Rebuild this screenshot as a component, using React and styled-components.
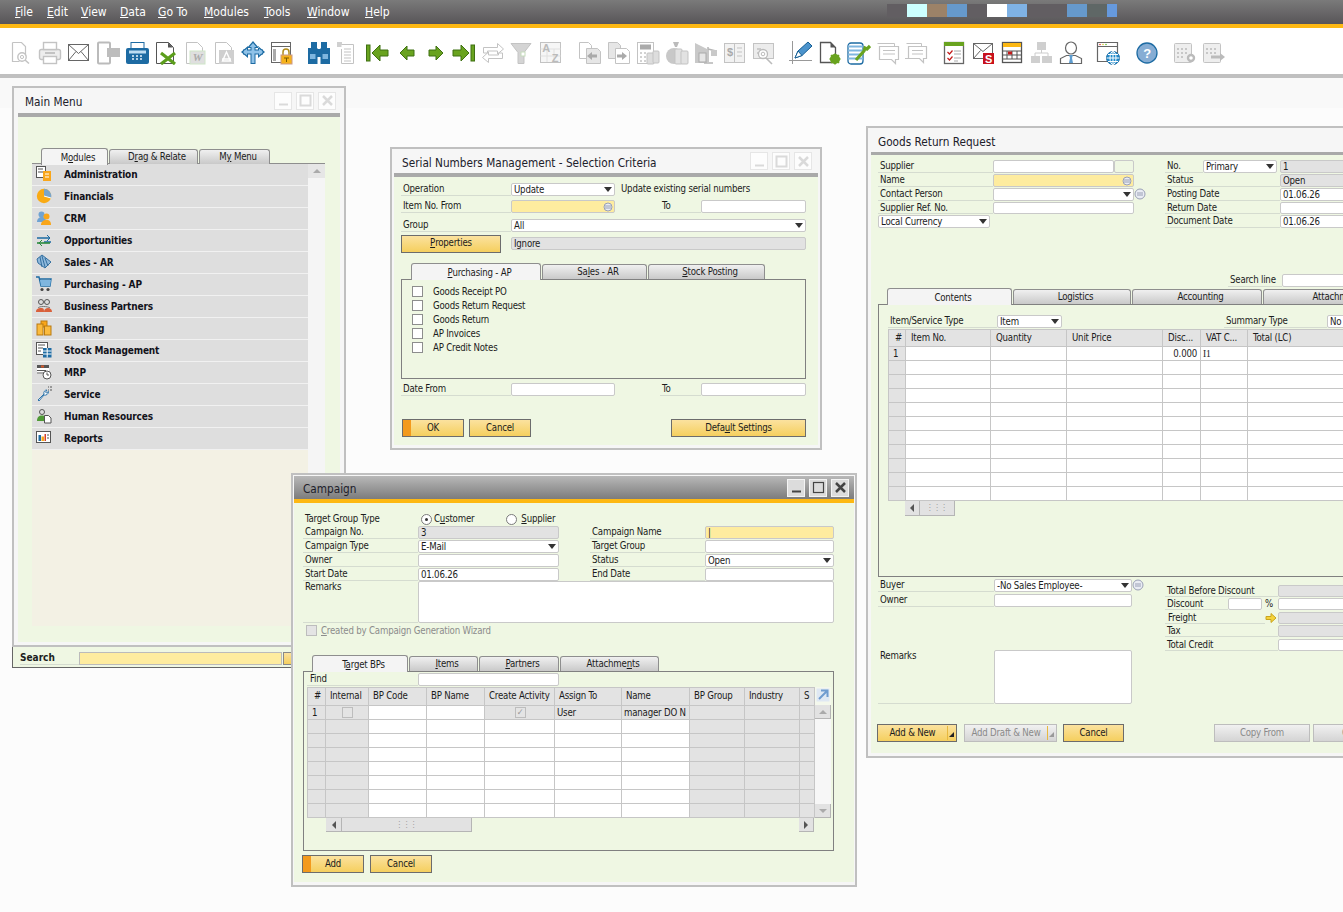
import React from 'react';
import styled, { createGlobalStyle, css } from 'styled-components';

const Global = createGlobalStyle`
  html, body { margin: 0; padding: 0; background: #fcfcfc; }
  body { font-family: "DejaVu Sans Condensed", "DejaVu Sans", "Noto Sans", sans-serif; font-stretch: condensed; font-size: 9.6px; letter-spacing: -0.2px; color: #1c1c1c; }
  u { text-decoration-thickness: 1px; text-underline-offset: 1px; }
`;

const Page = styled.div`width: 1343px; height: 912px; overflow: hidden; display: flex; flex-direction: column;`;
const MenuBar = styled.div`height: 24px; flex: none; display: flex; align-items: center; padding-left: 15px; background: linear-gradient(#7a7a7a, #585558); color: #fff; font-size: 12px; letter-spacing: 0;`;
const MenuItem = styled.span`white-space: nowrap; width: ${p => p.$w}px; flex: none;`;
const Swatches = styled.div`display: flex; margin-left: auto; margin-right: 226px; height: 13px; align-self: flex-start; margin-top: 4px;`;
const Swatch = styled.i`display: block; width: ${p => p.$w || 20}px; background: ${p => p.$c};`;
const OrangeLine = styled.div`height: 4px; flex: none; background: #fdb813;`;
const Toolbar = styled.div`height: 46px; box-sizing: border-box; flex: none; background: #fff; display: flex; align-items: center; padding: 3px 0 0 6px;`;
const ToolGroup = styled.div`display: flex; margin-right: ${p => p.$gap}px;`;
const Tool = styled.span`width: 29px; height: 24px; display: flex; justify-content: center;`;
const ToolStrip = styled.div`height: 4px; flex: none; background: #c0c0c0;`;
const Desktop = styled.div`flex: 1; position: relative; overflow: hidden; background: linear-gradient(#f9f9f9 30px, #fcfcfc 30px);`;

const Placed = styled.div`position: absolute; left: ${p => p.$x}px; top: ${p => p.$y - 78}px; width: ${p => p.$w}px;`;
const Frame = styled.div`height: ${p => p.$h}px; box-sizing: border-box; border: 2px solid #c0c0c0; background: #f6f6f6; padding: 0 ${p => p.$px}px 3px; display: flex; flex-direction: column;`;
const TitleBar = styled.div`height: ${p => p.$h}px; flex: none; display: flex; align-items: center; box-sizing: border-box; padding: 0 8px 0 ${p => p.$pl}px; margin: 0 ${p => -p.$px}px; font-size: 11.7px; letter-spacing: 0; color: #20202a;
  ${p => p.$active && css`background: linear-gradient(#b8b8b8, #7c7c7c); margin: 1px 0 0; padding: 0 5px 0 9px;`}`;
const TitleText = styled.span`flex: 1; white-space: nowrap; padding-top: 3px;`;
const TitleStrip = styled.div`height: ${p => p.$h}px; flex: none; background: ${p => p.$c};`;
const Controls = styled.div`display: flex; gap: 4px;`;
const WinBtn = styled.span`width: 18px; height: 18px; box-sizing: border-box; display: flex; align-items: center; justify-content: center; background: ${p => p.$active ? '#dcdcdc' : '#fdfdfd'}; border: 1px solid ${p => p.$active ? '#f4f4f4' : '#e6e6e6'};`;
const Body = styled.div`flex: 1; background: #eff7e3; padding-left: ${p => p.$pl || 0}px; padding-top: ${p => p.$pt || 0}px; overflow: hidden;`;

const Row = styled.div`display: flex; align-items: ${p => p.$align || 'stretch'}; height: ${p => p.$h || 13}px; margin-top: ${p => p.$mt || 0}px; margin-left: ${p => p.$ml || 0}px; white-space: nowrap;`;
const Label = styled.div`width: ${p => p.$w}px; flex: none; box-sizing: border-box; padding-left: ${p => p.$pl ?? 2}px; line-height: 12px; border-bottom: 1px solid ${p => p.$bare ? 'transparent' : '#d5dcd0'};`;
const Plain = styled.span`margin-left: ${p => p.$ml || 0}px; line-height: 12px; color: ${p => p.$c || 'inherit'};`;
const Field = styled.div`width: ${p => p.$w}px; height: ${p => p.$h ? p.$h + 'px' : 'auto'}; flex: none; box-sizing: border-box; display: flex; align-items: center; justify-content: space-between; padding: 0 1px 0 2px; line-height: 11px; overflow: hidden; border: 1px solid #c9c9c9; border-radius: 2px; background: ${p => ({ y: '#feec9f', g: '#e2e2e2', n: 'transparent' }[p.$tone] || '#fff')};`;
const Caret = styled.i`display: block; width: 0; height: 0; margin-right: 1px; border: 4px solid transparent; border-top: 5px solid #333; border-bottom: 0;`;
const Spacer = styled.div`width: ${p => p.$w}px; flex: none;`;

const TabBar = styled.div`display: flex; height: ${p => p.$h || 16}px; margin-top: ${p => p.$mt || 0}px; margin-left: ${p => p.$ml}px; gap: 1px; position: relative; z-index: 1; align-items: flex-end;`;
const Tab = styled.div`width: ${p => p.$w}px; box-sizing: border-box; text-align: center; padding-left: 7px; border: 1px solid #8e8e8e; border-bottom: 0; border-radius: 3px 3px 0 0; line-height: 13px; white-space: nowrap; overflow: hidden;
  ${p => p.$on ? css`height: calc(100% + 1px); margin-bottom: -1px; background: #f4f4f4; padding-top: 2px;` : css`height: calc(100% - 1px); background: linear-gradient(#f0f0f0, #c9c9c9);`}`;
const Panel = styled.div`width: ${p => p.$w}px; height: ${p => p.$h}px; box-sizing: border-box; border: 1px solid #808080; margin-left: ${p => p.$ml || 0}px; padding: ${p => p.$pad || 0}; overflow: hidden;`;
const CheckRow = styled.div`display: flex; align-items: center; height: 14px; padding-left: 10px;`;
const Check = styled.span`width: 11px; height: 11px; flex: none; box-sizing: border-box; border: 1px solid ${p => p.$dim ? '#bdbdbd' : '#8d8d8d'}; background: ${p => p.$dim ? '#e4e4e4' : '#fff'}; display: flex; align-items: center; justify-content: center; color: #999; font-size: 9px; margin-right: ${p => p.$mr ?? 10}px;`;
const Radio = styled.span`width: 11px; height: 11px; box-sizing: border-box; flex: none; border-radius: 50%; border: 1px solid #7b7b7b; background: #fff; display: flex; align-items: center; justify-content: center; margin-right: 2px; margin-top: 1px;
  &::after { content: ''; display: ${p => p.$on ? 'block' : 'none'}; width: 3px; height: 3px; border-radius: 50%; background: #333; }`;
const Button = styled.div`width: ${p => p.$w}px; height: 18px; box-sizing: border-box; flex: none; display: flex; align-items: center; justify-content: center; padding-bottom: 2px; white-space: nowrap; border: 1px solid #6c6c6c; background: ${p => p.$primary ? 'linear-gradient(90deg, #f39a1d 8px, transparent 8px), ' : ''}linear-gradient(#fbe29f, #f5cf5e);
  ${p => p.$off && css`background: linear-gradient(#f1f1f1, #d4d4d4); border-color: #bdbdbd; color: #8a8a8a;`}`;
const BtnLabel = styled.span`flex: 1; text-align: center;`;
const Split = styled.span`width: 9px; height: 100%; margin-bottom: -2px; flex: none; display: flex; align-items: flex-end; justify-content: center; padding-bottom: 3px; box-sizing: border-box; background: linear-gradient(90deg, #e8b93e 1px, transparent 1px);`;
const SplitMark = styled.i`display: block; width: 0; height: 0; border-left: 5px solid transparent; border-bottom: 5px solid ${p => p.$off ? '#999' : '#222'};`;

const GridWrap = styled.div`display: flex; margin-top: ${p => p.$mt}px; margin-left: ${p => p.$ml}px;`;
const Grid = styled.div`display: grid; flex: none; grid-template-columns: ${p => p.$cols.map(c => c + 'px').join(' ')}; grid-template-rows: ${p => p.$head}px repeat(${p => p.$rows}, ${p => p.$rh}px); border-left: 1px solid #c6c6c6; border-top: 1px solid #c6c6c6;`;
const Cell = styled.div`box-sizing: border-box; border-right: 1px solid #c6c6c6; border-bottom: 1px solid #c6c6c6; background: ${p => p.$g ? '#e3e3e3' : '#fff'}; padding: 0 ${p => p.$pr || 1}px 0 ${p => p.$pl || 2}px; line-height: 13px; overflow: hidden; white-space: nowrap; text-align: ${p => p.$right ? 'right' : 'left'}; display: ${p => p.$center ? 'flex' : 'block'}; align-items: center; justify-content: center; ${p => p.$serif && 'font-family: "Liberation Serif", serif;'}`;
const HeadCell = styled(Cell)`background: #e3e3e3; padding-left: ${p => p.$pl || 5}px; padding-top: 1px;`;
const VBar = styled.div`width: 16px; flex: none; display: flex; flex-direction: column; background: #f4f8ec;`;
const Expand = styled.div`height: ${p => p.$h}px; flex: none; display: flex; justify-content: center;`;
const SBtn = styled.div`width: ${p => p.$w || 'auto'}; height: ${p => p.$h || 'auto'}; flex: none; background: #e2e2e2; border-right: 1px solid #b5b5b5; border-bottom: 1px solid #b5b5b5; box-sizing: border-box; display: flex; align-items: center; justify-content: center;`;
const VFill = styled.div`flex: 1; background: #f7f7f7;`;
const Tri = styled.i`display: block; width: 0; height: 0; border: 4px solid transparent;
  ${p => p.$d === 'up' && css`border-bottom: 4px solid #aaa; border-top: 0;`}
  ${p => p.$d === 'down' && css`border-top: 4px solid #aaa; border-bottom: 0;`}
  ${p => p.$d === 'left' && css`border-right: 4px solid #555; border-left: 0;`}
  ${p => p.$d === 'right' && css`border-left: 4px solid #555; border-right: 0;`}`;
const HBar = styled.div`display: flex; height: ${p => p.$h}px; margin-left: ${p => p.$ml}px; width: ${p => p.$w}px;`;
const Thumb = styled(SBtn)`color: #999; font-size: 8px; letter-spacing: 0; line-height: 8px;`;

const TopColumns = styled.div`display: flex; padding-top: ${p => p.$pt}px;`;
const Col = styled.div`width: ${p => p.$w}px; flex: none;`;

const Tabs2 = styled.div`margin-top: 31px; margin-left: 14px;`;
const MenuPanel = styled.div`display: flex; width: 293px; height: 463px; margin-top: -1px; border-top: 1px solid #8e8e8e; box-sizing: border-box;`;
const ModList = styled.div`width: 276px; flex: none; background: #f3f1e4;`;
const ModRow = styled.div`height: 22px; box-sizing: border-box; background: #dedede; border-bottom: 1px solid #f1f1f1; display: flex; align-items: center; padding: 0 0 1px 4px; font-weight: 700; font-size: 10px; letter-spacing: -0.15px; color: #12121a;`;
const ModText = styled.span`margin-left: 12px;`;
const ScrollCol = styled.div`flex: 1; display: flex; flex-direction: column; background: #f5f5f5;`;
const ScrollTop = styled.div`height: 14px; background: #e6e6e6; display: flex; align-items: center; justify-content: center;`;
const SearchStrip = styled.div`height: 21px; box-sizing: border-box; background: #eff7e3; border-left: 1px solid #666; border-bottom: 1px solid #666; display: flex; align-items: center; padding: 2px 0 0 7px; font-weight: 700; font-size: 10px; letter-spacing: 0;`;
const SearchInput = styled.div`width: 203px; height: 13px; box-sizing: border-box; border: 1px solid #bbb; background: #feec9f; flex: none;`;
const SearchBtn = styled.div`width: 12px; height: 13px; margin-left: 1px; flex: none; border: 1px solid #888; box-sizing: border-box; background: linear-gradient(#fbe29f, #f5cf5e);`;
const SearchLabel = styled.div`width: 59px; flex: none; border-bottom: 1px solid #d5dcd0; line-height: 12px;`;

const IconSvg = styled.svg`display: block; flex: none;`;
const S = ({ s = 24, children }) => <IconSvg width={s} height={s} viewBox={`0 0 ${s} ${s}`} fill="none" strokeLinejoin="miter">{children}</IconSvg>;
const G = '#c3c3c3', D = '#666', B = '#1d6ba3', L = '#7fb6df', N = '#69a31f', NN = '#3f7013';
const TI = {
  docSearch: <><path d="M3.5 1.5h9l4 4v9M3.5 1.5v19h7" stroke={G} strokeWidth="1.2" /><circle cx="13" cy="16" r="4.2" stroke={G} strokeWidth="1.4" /><circle cx="13" cy="16" r="1.6" stroke={G} /><path d="M16 19l4 3.5" stroke={G} strokeWidth="1.6" /></>,
  printer: <><rect x="1.5" y="8.5" width="21" height="10" rx="2" fill="#ededed" stroke={G} strokeWidth="1.4" /><rect x="5.5" y="1.5" width="13" height="7" fill="#fff" stroke={G} strokeWidth="1.4" /><rect x="5.5" y="15.5" width="13" height="7" fill="#fff" stroke={G} strokeWidth="1.4" /><path d="M7 12h10" stroke={G} strokeWidth="2" /></>,
  mail: <><rect x="1.5" y="3.5" width="20" height="16" fill="#fff" stroke={D} /><path d="M1.5 3.5L11.5 12.5 21.5 3.5M1.5 19.5l7.5-9M21.5 19.5l-7.5-9" stroke={D} /></>,
  phone: <><rect x="2" y="1.5" width="12" height="21" rx="1" fill="#fff" stroke="#bbb" strokeWidth="2" /><path d="M11 7h13v9h-9l-2 3v-3h-2z" fill="#bdbdbd" /></>,
  fax: <><rect x="1" y="7" width="23" height="16" rx="2" fill={B} /><rect x="6" y="1.5" width="13" height="6" fill="#fff" stroke={B} /><rect x="4" y="9.5" width="17" height="3" fill="#bcdcf2" /><path d="M7 15h2M11 15h2M15 15h2M7 18h2M11 18h2M15 18h2" stroke="#e8f3fb" strokeWidth="1.4" /></>,
  excel: <><path d="M2.5 1.5h12l5 5v16h-17z" fill="#fff" stroke="#555" /><path d="M14 1.5l5 5h-5z" fill="#555" /><path d="M7 12l14 11M21 12L7 23" stroke="#5c9e1c" strokeWidth="3.2" /></>,
  word: <><path d="M3.5 1.5h11l5 5v16h-16z" fill="#fff" stroke={G} /><rect x="7" y="10" width="15" height="13" fill="#dfdfdf" stroke="#cfe6c8" /><text x="14.5" y="20" fontSize="11" fontStyle="italic" fontWeight="700" fill="#aaa" textAnchor="middle" fontFamily="Liberation Serif">W</text></>,
  pdf: <><path d="M3.5 1.5h11l5 5v16h-16z" fill="#fff" stroke={G} /><rect x="7" y="9" width="15" height="14" fill="#cfcfcf" /><path d="M14.5 11l4 9h-8zM10 18h9" stroke="#fff" strokeWidth="1.4" /></>,
  move: <><path d="M12 23V4M2 11h20" stroke={B} strokeWidth="5" /><path d="M12 0l6 7H6zM0 11l7-6v12zM24 11l-7-6v12z" fill={B} /><path d="M12 22V4M3 11h18" stroke="#8fc2e8" strokeWidth="3" /><path d="M12 2l3.5 4h-7zM2 11l4-3.5v7zM22 11l-4-3.5v7z" fill="#8fc2e8" /></>,
  lock: <><rect x="1.5" y="1.5" width="19" height="20" fill="#fff" stroke={D} /><path d="M1.5 5.5h19" stroke={D} /><rect x="3" y="8" width="3" height="12" fill="#aaa" /><path d="M13 14v-3a3 3 0 016 0v3" stroke="#b08b1c" strokeWidth="1.5" /><rect x="11" y="14" width="11" height="9" fill="#f6b21b" stroke="#c98" /><path d="M14 17h5M16.5 17v4" stroke="#7a5a00" /></>,
  binoc: <><rect x="4" y="1" width="6" height="9" fill={B} /><rect x="14" y="1" width="6" height="9" fill={B} /><rect x="1" y="7" width="9.5" height="16" fill={B} /><rect x="13.5" y="7" width="9.5" height="16" fill={B} /><rect x="10" y="8" width="4" height="8" fill={B} /><rect x="3" y="13" width="5.5" height="5" fill={L} /><rect x="15.5" y="13" width="5.5" height="5" fill={L} /></>,
  list: <><rect x="1" y="1" width="5" height="5" fill="#d0d0d0" /><path d="M5.5 3.5h12v19H5.5V8" fill="#fff" stroke={G} /><path d="M8 8h7M8 11h7M8 14h7M8 17h7M8 20h7" stroke={G} /></>,
  first: <><rect x="1.5" y="4" width="3.5" height="16" fill={N} stroke={NN} /><path d="M7 12l8-8v5h8v6h-8v5z" fill={N} stroke={NN} /></>,
  prev: <path d="M6 12l7-7v4h7v6h-7v4z" fill={N} stroke={NN} />,
  next: <path d="M20 12l-7-7v4H6v6h7v4z" fill={N} stroke={NN} />,
  last: <><path d="M17 12l-8-8v5H1v6h8v5z" fill={N} stroke={NN} /><rect x="19" y="4" width="3.5" height="16" fill={N} stroke={NN} /></>,
  swap: <><path d="M2.5 12V6.5h14v-4l6 5.5-6 5v-3h-10v2zM21.5 12v5.5h-14v4l-6-5 6-5.5v3h10v-2z" fill="#fff" stroke={G} /></>,
  funnel: <><path d="M1 2.5h20l-7 9v11h-6v-11z" fill="#d4d4d4" stroke={G} /><rect x="11" y="11" width="4" height="4" fill="#fff" stroke="#c6dcbc" /></>,
  az: <><rect x="1.5" y="1.5" width="20" height="20" fill="#f6f6f6" stroke={G} /><path d="M1.5 8h20M1.5 15h20M8 8v13M15 8v13" stroke="#e0e0e0" /><text x="7" y="11" fontSize="11" fontWeight="700" fill="#bbb" fontFamily="Liberation Sans" textAnchor="middle">A</text><text x="16" y="21" fontSize="11" fontWeight="700" fill="#bbb" fontFamily="Liberation Sans" textAnchor="middle">Z</text></>,
  docIn: <><path d="M1.5 1.5h9l3 3v13h-12z" fill="#fff" stroke={G} /><path d="M8.5 7.5h11l3 3v12h-14z" fill="#e6e6e6" stroke={G} /><path d="M9 15l5-4v2.5h5v3h-5V19z" fill="#aaa" /></>,
  docOut: <><path d="M1.5 1.5h9l3 3v13h-12z" fill="#e6e6e6" stroke={G} /><path d="M8.5 7.5h11l3 3v12h-14z" fill="#fff" stroke={G} /><path d="M20 15l-5-4v2.5h-5v3h5V19z" fill="#aaa" /></>,
  calc: <><rect x="1.5" y="1.5" width="16" height="21" fill="#fff" stroke={G} /><rect x="4" y="3.5" width="11" height="5" fill="#aaa" /><path d="M4 12h2M8 12h2M4 16h2M8 16h2M4 20h2M8 20h2" stroke={G} strokeWidth="1.5" /><rect x="11" y="12" width="7" height="11" rx="1" fill="#ddd" stroke={G} /><rect x="17" y="10" width="6" height="12" rx="1" fill="#ddd" stroke={G} /></>,
  bag: <><path d="M8 1h6l-2 5h-2z" fill="#bbb" /><ellipse cx="9" cy="15" rx="8" ry="8" fill="#c8c8c8" /><rect x="10" y="8" width="7" height="15" rx="1" fill="#e2e2e2" stroke={G} /><rect x="16" y="10" width="7" height="13" rx="1" fill="#e2e2e2" stroke={G} /></>,
  scale: <><path d="M1 2l12 6v14H1z" fill="#c9c9c9" /><rect x="5" y="12" width="7" height="9" fill="#e6e6e6" stroke="#aaa" /><path d="M14 21V6M10 22h9M14 8l8 2" stroke="#b5b5b5" strokeWidth="1.5" /><rect x="17" y="9" width="6" height="6" fill="#c9c9c9" /></>,
  book: <><rect x="1.5" y="2.5" width="20" height="19" fill="#f2f2f2" stroke={G} /><path d="M11.5 2.5v19M14 7h5M14 11h5M14 15h5" stroke={G} /><text x="7" y="15" fontSize="11" fontWeight="700" fill="#aaa" textAnchor="middle" fontFamily="Liberation Sans">$</text></>,
  chartLens: <><rect x="1.5" y="2.5" width="20" height="15" fill="#ececec" stroke={G} /><path d="M5 8h4M5 12h3" stroke="#aaa" /><circle cx="11" cy="13" r="4.5" fill="#fff" stroke="#bbb" strokeWidth="1.3" /><circle cx="11" cy="13" r="1.8" stroke="#bbb" /><path d="M14 17l6 6" stroke="#bbb" strokeWidth="1.6" /></>,
  pencil: <><path d="M3.5 0v23M0 19.5h23" stroke="#999" /><path d="M6 17l3-7L19 1l4 4-10 9.5z" fill="#4b93cc" stroke="#155e94" /><path d="M6 17l3-7 4 4.5z" fill="#fff" stroke="#155e94" /></>,
  docGear: <><path d="M2.5 1.5h10l5 5v15h-15z" fill="#fff" stroke="#555" strokeWidth="1.3" /><path d="M12.5 1.5l5 5h-5z" fill="#555" /><circle cx="17" cy="18" r="3.6" stroke={N} strokeWidth="3" /><path d="M17 12.5v11M11.5 18h11M13 14l8 8M21 14l-8 8" stroke={N} strokeWidth="1.6" /></>,
  dbWrench: <><rect x="1" y="2" width="15" height="21" rx="3" fill="#fff" stroke={B} strokeWidth="1.3" /><path d="M1 5.5h15M1 9.5h15M1 13.5h15M1 17.5h15" stroke={L} strokeWidth="2" /><path d="M23 5l-3 3-2-1-1 3-8 9" stroke={N} strokeWidth="3.2" /></>,
  chat: <><path d="M1.5 2.5h17v3" stroke={G} /><path d="M3.5 5.5h19v13h-3v4l-4-4h-12z" fill="#fff" stroke={G} strokeWidth="1.2" /><path d="M7 9.5h12M7 13h12" stroke={G} /></>,
  chat2: <><path d="M1.5 2.5h15v3" stroke={G} /><path d="M3.5 5.5h18v12h-3v4l-4-4h-11z" fill="#fff" stroke={G} strokeWidth="1.2" /><path d="M7 9.5h11M7 13h11M0 17.5h8" stroke={G} /></>,
  todo: <><rect x="1.5" y="1.5" width="19" height="21" fill="#fff" stroke={D} strokeWidth="1.3" /><rect x="1" y="1" width="20" height="4" fill={N} /><path d="M4.5 11l2 2 3-3.5M4.5 17l2 2 3-3.5" stroke="#c41c1c" strokeWidth="1.2" /><path d="M11 10h7M11 13h7M11 17h7M11 20h4" stroke="#aaa" /></>,
  mailS: <><rect x="1.5" y="2.5" width="19" height="15" fill="#fff" stroke={D} /><path d="M1.5 2.5l9.5 8 9.5-8M1.5 17.5l7-8" stroke={D} /><rect x="11" y="12" width="11" height="11" fill="#c8101c" /><text x="16.5" y="21.5" fontSize="11" fontWeight="700" fill="#fff" textAnchor="middle" fontFamily="Liberation Sans">S</text></>,
  cal: <><rect x="1.5" y="1.5" width="19" height="20" fill="#fff" stroke="#555" strokeWidth="1.3" /><rect x="2" y="2" width="18" height="4" fill="#fdb813" /><path d="M2 10h18M2 14h18M2 18h18M6 10v8M11 10v8M16 10v8" stroke="#555" /><rect x="7" y="10.5" width="4" height="3" fill="#c41c1c" /></>,
  org: <><rect x="7" y="1" width="9" height="8" fill="#cfcfcf" /><path d="M11.5 9v3M5 15v-3h13v3" stroke="#ccc" /><rect x="1" y="15" width="9" height="7" fill="#cfcfcf" /><rect x="12" y="15" width="10" height="7" fill="#cfcfcf" /></>,
  person: <><ellipse cx="12" cy="7" rx="5.5" ry="6" fill="#fff" stroke={D} strokeWidth="1.2" /><path d="M1.5 22.5v-5l6-3h9l6 3v5z" fill="#fff" stroke={D} strokeWidth="1.2" /><path d="M10 14h4l-1 3 1 5h-4l1-5z" fill="#5e9dd0" /></>,
  globe: <><path d="M15 20.5H1.5v-19h20v11" fill="#fff" stroke={D} strokeWidth="1.2" /><path d="M1.5 5.5h20" stroke={D} /><circle cx="4" cy="3.5" r=".8" fill="#d33" /><circle cx="7" cy="3.5" r=".8" fill="#dc3" /><circle cx="10" cy="3.5" r=".8" fill="#6b3" /><circle cx="17" cy="17" r="6.5" fill="#1f8acb" stroke={B} /><path d="M10.5 17h13M17 10.5v13M12 13.5h10M12 20.5h10" stroke="#fff" /><ellipse cx="17" cy="17" rx="3" ry="6.5" stroke="#fff" /></>,
  help: <><circle cx="12" cy="12" r="10" fill="#86add4" stroke={B} strokeWidth="1.3" /><text x="12" y="16.5" fontSize="13" fontWeight="700" fill="#fff" textAnchor="middle" fontFamily="Liberation Sans">?</text></>,
  gridGear: <><rect x="1.5" y="2.5" width="17" height="19" rx="1" fill="#eee" stroke={G} /><path d="M4 8h2M8 8h2M12 8h2M4 12h2M8 12h2M12 12h2M4 16h2M8 16h2" stroke="#bbb" strokeWidth="1.4" /><circle cx="18" cy="17" r="3" stroke="#bbb" strokeWidth="2.4" fill="#fff" /></>,
  gridArrow: <><rect x="1.5" y="2.5" width="17" height="19" rx="1" fill="#eee" stroke={G} /><path d="M4 8h2M8 8h2M12 8h2M4 12h2M8 12h2M12 12h2" stroke="#bbb" strokeWidth="1.4" /><path d="M23 16l-5-4v2.5H9v3h9V20z" fill="#bbb" /></>
};
const toolGroups = [
  [8, ['docSearch','printer','mail','phone','fax','excel','word','pdf','move','lock']],
  [10, ['binoc','list','first','prev','next','last','swap','funnel','az']],
  [8, ['docIn','docOut','calc','bag','scale','book','chartLens']],
  [9, ['pencil','docGear','dbWrench','chat','chat2']],
  [8, ['todo','mailS','cal','org','person']],
  [10, ['globe']],
  [9, ['help']],
  [0, ['gridGear','gridArrow']]
];

const MI = {
  Administration: <><rect x=".5" y=".5" width="9" height="11" fill="#fff" stroke="#555" /><path d="M2 3h5M2 6h5" stroke="#555" /><rect x="7" y="5" width="8" height="10" fill="#f9a61a" /><path d="M9 8h4M9 11h4" stroke="#fff" /></>,
  Financials: <><circle cx="8" cy="8" r="7.2" fill="#f9ab14" /><path d="M8 8V.8A7.2 7.2 0 0115 10z" fill="#7aa5c9" /><path d="M8 8l7 2" stroke="#fff" /></>,
  CRM: <><circle cx="5.5" cy="4.5" r="3" fill="#6fa3d2" /><path d="M1 12c0-3 2-5 5-5s4 2 4 5z" fill="#6fa3d2" /><circle cx="10.5" cy="6.5" r="3" fill="#f9a61a" /><path d="M5 15c0-3 2-5 5.5-5S15 12 15 15z" fill="#f9a61a" /></>,
  Opportunities: <><path d="M1 6h13M8 10H15" stroke="#1d6ba3" strokeWidth="1.6" /><path d="M1 11h13" stroke="#2b8a3e" strokeWidth="1.6" /><path d="M11 3l3 3-3 3" stroke="#1d6ba3" /><path d="M6 8l-3 3 3 3" stroke="#2b8a3e" /></>,
  'Sales - AR': <><path d="M1 5l5-4 9 7-6 6L2 9z" fill="#8fb9dc" stroke="#336f9f" /><path d="M4 3l2 10M6 2l3 11M9 4l3 8" stroke="#336f9f" /></>,
  'Purchasing - AP': <><path d="M0 1h3l2 9h9l1-7H4" stroke="#1d6ba3" strokeWidth="1.4" /><path d="M4 4h11l-1 6H5z" fill="#7fb6df" /><circle cx="6" cy="13.5" r="1.6" fill="#444" /><circle cx="12" cy="13.5" r="1.6" fill="#444" /></>,
  'Business Partners': <><circle cx="5" cy="4" r="2.5" stroke="#555" /><circle cx="11" cy="4" r="2.5" stroke="#555" /><path d="M2 10c1-2 10-2 12 0" stroke="#777" /><path d="M0 14c0-3 2-4 5-4s3 1 3 4zM8 14c0-3 2-4 4-4s4 1 4 4z" fill="#d9603b" /></>,
  Banking: <><rect x="5" y="1" width="6" height="6" fill="#f9a61a" stroke="#b97a10" /><rect x="1" y="4" width="6" height="11" fill="#fbbb3e" stroke="#b97a10" /><rect x="8.5" y="6" width="6.5" height="9" fill="#fbbb3e" stroke="#b97a10" /></>,
  'Stock Management': <><rect x=".5" y=".5" width="11" height="12" fill="#fff" stroke="#555" /><path d="M2 3h7M2 6h5M2 9h3" stroke="#555" /><rect x="7" y="6" width="8.5" height="9.5" fill="#1d6ba3" /><path d="M11.2 6v9.5M7 9h8.5M7 12h8.5" stroke="#fff" /></>,
  MRP: <><rect x="1" y="1" width="12" height="9" fill="#fff" /><rect x="1" y="1" width="12" height="3" fill="#555" /><rect x="5" y="1.5" width="3" height="2" fill="#d5582a" /><path d="M1 6.5h9M1 9h7" stroke="#555" /><circle cx="11" cy="11" r="4" fill="#fff" stroke="#555" /><path d="M11 8.5V11h2" stroke="#555" /></>,
  Service: <><path d="M2 14l6-6a3 3 0 013-4l-1.5 2 1 1 2-1.5a3.5 3.5 0 01-4.5 3.5l-5 6z" fill="#fff" stroke="#2f75ab" /><path d="M12 1h1M12 4h1M14 1h2M14 4h2" stroke="#555" /></>,
  'Human Resources': <><circle cx="6" cy="4" r="2.5" stroke="#555" /><path d="M1 13c0-4 2-5.5 5-5.5s4 1.500 4 5.500z" fill="#4f9a36" /><path d="M8.5 7.500h4l2.500 2.500v5h-6.500z" fill="#fff" stroke="#555" /></>,
  Reports: <><rect x=".5" y="1.500" width="14" height="11" fill="#fff" stroke="#555" /><rect x="2.500" y="5" width="2.500" height="6" fill="#1d6ba3" /><rect x="5.500" y="6.500" width="2.500" height="4.500" fill="#f9a61a" /><rect x="8.500" y="4" width="1.500" height="7" fill="#d5402a" /><path d="M11 5h2M11 8h2" stroke="#555" /></>
};
const Pick = ({ r = 5, c = '#9aa0b5', f = '#e9ecf4' }) => <IconSvg width={r * 2 + 2} height={r * 2 + 2}><circle cx={r + 1} cy={r + 1} r={r} fill={f} stroke={c} /><path d={`M${r - 2} ${r}h6M${r - 2} ${r + 2}h6`} stroke={c} /></IconSvg>;
const Wbtn = ({ k, on }) => {
  const c = on ? '#444' : '#dadada';
  const d = { min: <path d="M3 11.500h9" stroke={c} strokeWidth="2" />, max: <rect x="2.500" y="2.500" width="10" height="10" stroke={c} strokeWidth={on ? 1.2 : 2} />, x: <path d="M3 3l9 9M12 3l-9 9" stroke={c} strokeWidth="2.500" /> }[k];
  return <WinBtn $active={on}><IconSvg width="15" height="15" fill="none">{d}</IconSvg></WinBtn>;
};
const Ctrl = ({ on }) => <Controls>{['min', 'max', 'x'].map(k => <Wbtn key={k} k={k} on={on} />)}</Controls>;
const SelectF = ({ w, h, children }) => <Field $w={w} $h={h}><span>{children}</span><Caret /></Field>;

const modules = Object.keys(MI);
const campCols = [18, 43, 58, 58, 70, 67, 68, 55, 55, 15];
const campHead = ['#', 'Internal', 'BP Code', 'BP Name', 'Create Activity', 'Assign To', 'Name', 'BP Group', 'Industry', 'S'];
const goodsCols = [17, 85, 76, 96, 38, 47, 200];
const goodsHead = ['#', 'Item No.', 'Quantity', 'Unit Price', 'Disc...', 'VAT C...', 'Total (LC)'];
const menus = [['File', 32], ['Edit', 34], ['View', 39], ['Data', 38], ['Go To', 46], ['Modules', 60], ['Tools', 43], ['Window', 58], ['Help', 30]];

function MainMenu() {
  return (
    <Placed $x={12} $y={86} $w={334}>
      <Frame $h={561} $px={4}>
        <TitleBar $h={25} $pl={11} $px={4}><TitleText>Main Menu</TitleText><Ctrl /></TitleBar>
        <TitleStrip $h={4} $c="#a9a9a9" />
        <Body>
          <Tabs2>
            <TabBar $ml={9} $mt={0}>
              <Tab $w={67} $on>M<u>o</u>dules</Tab>
              <Tab $w={89}>D<u>r</u>ag &amp; Relate</Tab>
              <Tab $w={71}>M<u>y</u> Menu</Tab>
            </TabBar>
            <MenuPanel>
              <ModList>
                {modules.map(m => <ModRow key={m}><S s={16}>{MI[m]}</S><ModText>{m}</ModText></ModRow>)}
              </ModList>
              <ScrollCol><ScrollTop><Tri $d="up" /></ScrollTop></ScrollCol>
            </MenuPanel>
          </Tabs2>
        </Body>
      </Frame>
      <SearchStrip>
        <SearchLabel>Search</SearchLabel>
        <SearchInput />
        <SearchBtn />
      </SearchStrip>
    </Placed>
  );
}

function SerialWindow() {
  return (
    <Placed $x={390} $y={147} $w={432}>
      <Frame $h={303} $px={2}>
        <TitleBar $h={24} $pl={10} $px={2}><TitleText>Serial Numbers Management - Selection Criteria</TitleText><Ctrl /></TitleBar>
        <TitleStrip $h={4} $c="#a9a9a9" />
        <Body $pl={7}>
          <Row $mt={6}><Label $w={110}>Operation</Label><SelectF w={104}>Update</SelectF><Plain $ml={6}>Update existing serial numbers</Plain></Row>
          <Row $mt={4}><Label $w={110}>Item No. From</Label><Field $w={104} $tone="y"><span /><Pick r={4} /></Field><Spacer $w={45} /><Label $w={41}>To</Label><Field $w={105} /></Row>
          <Row $mt={6}><Label $w={110}>Group</Label><SelectF w={295}>All</SelectF></Row>
          <Row $mt={3} $h={17} $align="center"><Button $w={100}><u>P</u>roperties</Button><Spacer $w={10} /><Field $w={295} $h={13} $tone="g">Ignore</Field></Row>
          <TabBar $mt={11} $ml={10}>
            <Tab $w={130} $on><u>P</u>urchasing - AP</Tab>
            <Tab $w={105}>Sa<u>l</u>es - AR</Tab>
            <Tab $w={117}><u>S</u>tock Posting</Tab>
          </TabBar>
          <Panel $w={405} $h={100} $pad="4px 0 0">
            {['Goods Receipt PO', 'Goods Return Request', 'Goods Return', 'AP Invoices', 'AP Credit Notes'].map(t => <CheckRow key={t}><Check />{t}</CheckRow>)}
          </Panel>
          <Row $mt={4}><Label $w={110}>Date From</Label><Field $w={104} /><Spacer $w={45} /><Label $w={41}>To</Label><Field $w={105} /></Row>
          <Row $mt={23} $h={18} $ml={1}>
            <Button $w={62} $primary>OK</Button><Spacer $w={5} /><Button $w={62}>Cancel</Button><Spacer $w={140} /><Button $w={135}>Defa<u>u</u>lt Settings</Button>
          </Row>
        </Body>
      </Frame>
    </Placed>
  );
}

function CampaignWindow() {
  return (
    <Placed $x={291} $y={473} $w={566}>
      <Frame $h={414} $px={1}>
        <TitleBar $active $h={23} $px={1}><TitleText>Campaign</TitleText><Ctrl on /></TitleBar>
        <TitleStrip $h={4} $c="#fdb813" />
        <Body $pl={9} $pt={10}>
          <Row><Label $w={115} $bare>Target Group Type</Label><Spacer $w={3} /><Radio $on /><Plain>C<u>u</u>stomer</Plain><Spacer $w={32} /><Radio /><Plain $ml={2}><u>S</u>upplier</Plain></Row>
          <Row><Label $w={115}>Campaign No.</Label><Field $w={141} $tone="g">3</Field><Spacer $w={31} /><Label $w={115}>Campaign Name</Label><Field $w={129} $tone="y"><span>|</span></Field></Row>
          <Row $mt={1}><Label $w={115}>Campaign Type</Label><SelectF w={141}>E-Mail</SelectF><Spacer $w={31} /><Label $w={115}>Target Group</Label><Field $w={129} /></Row>
          <Row $mt={1}><Label $w={115}>Owner</Label><Field $w={141} /><Spacer $w={31} /><Label $w={115}>Status</Label><SelectF w={129}>Open</SelectF></Row>
          <Row $mt={1}><Label $w={115}>Start Date</Label><Field $w={141}>01.06.26</Field><Spacer $w={31} /><Label $w={115}>End Date</Label><Field $w={129} /></Row>
          <Row $h={42}><Label $w={115}>Remarks</Label><Field $w={416} /></Row>
          <Row $mt={1} $ml={3} $align="center"><Check $dim $mr={4} /><Plain $c="#8c8c8c"><u>C</u>reated by Campaign Generation Wizard</Plain></Row>
          <TabBar $mt={18} $ml={9}>
            <Tab $w={96} $on>T<u>a</u>rget BPs</Tab>
            <Tab $w={69}><u>I</u>tems</Tab>
            <Tab $w={80}><u>P</u>artners</Tab>
            <Tab $w={99}>Attachme<u>n</u>ts</Tab>
          </TabBar>
          <Panel $w={531} $h={180} $pad="1px 0 0 3px">
            <Row><Label $w={111} $pl={3}>Find</Label><Field $w={141} /></Row>
            <GridWrap $mt={1} $ml={0}>
              <Grid $cols={campCols} $head={18} $rows={8} $rh={14}>
                {campHead.map((h, i) => <HeadCell key={h} $pl={i === 0 ? 6 : 4}>{h}</HeadCell>)}
                <Cell $g $pl={4}>1</Cell><Cell $g $center><Check $dim $mr={0} /></Cell><Cell /><Cell />
                <Cell $g $center><Check $dim $mr={0}>✓</Check></Cell><Cell $g>User</Cell><Cell $g>manager DO N</Cell><Cell $g /><Cell $g /><Cell $g />
                {Array.from({ length: 7 }).flatMap((_, r) => campCols.map((c, i) => <Cell key={r + '-' + i} $g={i < 2 || i > 6} />))}
              </Grid>
              <VBar>
                <Expand $h={18}><IconSvg width="14" height="15" fill="none"><rect x=".5" y="1.500" width="13" height="13" fill="#dfe8f3" /><path d="M3 12l8-8M5 3.500h6.500V10" stroke="#6f9ccf" strokeWidth="2" /></IconSvg></Expand>
                <SBtn $h="14px"><Tri $d="up" /></SBtn>
                <VFill />
                <SBtn $h="14px"><Tri $d="down" /></SBtn>
              </VBar>
            </GridWrap>
            <HBar $ml={19} $w={489} $h={14}>
              <SBtn $w="16px"><Tri $d="left" /></SBtn>
              <Thumb $w="130px">⋮⋮⋮</Thumb>
              <Spacer $w={327} />
              <SBtn $w="15px"><Tri $d="right" /></SBtn>
            </HBar>
          </Panel>
          <Row $mt={4} $h={18} $ml={-1}><Button $w={62} $primary>Add</Button><Spacer $w={6} /><Button $w={62}>Cancel</Button></Row>
        </Body>
      </Frame>
    </Placed>
  );
}

function GoodsWindow() {
  return (
    <Placed $x={866} $y={126} $w={700}>
      <Frame $h={632} $px={3}>
        <TitleBar $h={24} $pl={10} $px={3}><TitleText>Goods Return Request</TitleText></TitleBar>
        <TitleStrip $h={3} $c="#a9a9a9" />
        <Body $pl={7}>
          <TopColumns $pt={5}>
            <Col $w={287}>
              <Row><Label $w={115}>Supplier</Label><Field $w={121} /><Field $w={20} $tone="n" /></Row>
              <Row $mt={1}><Label $w={115}>Name</Label><Field $w={141} $tone="y"><span /><Pick r={4} /></Field></Row>
              <Row $mt={1}><Label $w={115}>Contact Person</Label><SelectF w={141} /><Pick /></Row>
              <Row $mt={1} $h={12}><Label $w={115}>Supplier Ref. No.</Label><Field $w={141} /></Row>
              <Row $mt={1}><SelectF w={112}>Local Currency</SelectF></Row>
            </Col>
            <Col $w={400}>
              <Row><Label $w={38}>No.</Label><SelectF w={74}>Primary</SelectF><Spacer $w={3} /><Field $w={200} $tone="g">1</Field></Row>
              <Row $mt={1}><Label $w={115}>Status</Label><Field $w={200} $tone="g">Open</Field></Row>
              <Row $mt={1}><Label $w={115}>Posting Date</Label><Field $w={200}>01.06.26</Field></Row>
              <Row $mt={1} $h={12}><Label $w={115}>Return Date</Label><Field $w={200} /></Row>
              <Row $mt={1}><Label $w={115}>Document Date</Label><Field $w={200}>01.06.26</Field></Row>
            </Col>
          </TopColumns>
          <Row $mt={46} $ml={350}><Label $w={54}>Search line</Label><Field $w={200} /></Row>
          <TabBar $mt={1} $ml={9}>
            <Tab $w={125} $on>Contents</Tab>
            <Tab $w={118}>Logistics</Tab>
            <Tab $w={130}>Accounting</Tab>
            <Tab $w={145}>Attachments</Tab>
          </TabBar>
          <Panel $w={700} $h={273} $pad="10px 0 0 9px">
            <Row><Label $w={109}>Item/Service Type</Label><SelectF w={65}>Item</SelectF><Spacer $w={162} /><Label $w={103}>Summary Type</Label><SelectF w={60}>No</SelectF></Row>
            <GridWrap $mt={1} $ml={0}>
              <Grid $cols={goodsCols} $head={17} $rows={11} $rh={14}>
                {goodsHead.map((h, i) => <HeadCell key={h} $pl={i === 0 ? 6 : 5}>{h}</HeadCell>)}
                <Cell $g $pl={4}>1</Cell><Cell /><Cell /><Cell /><Cell $right $pr={3}>0.000</Cell><Cell $pl={2} $serif>I1</Cell><Cell />
                {Array.from({ length: 10 }).flatMap((_, r) => goodsCols.map((c, i) => <Cell key={r + '-' + i} $g={i === 0} />))}
              </Grid>
            </GridWrap>
            <HBar $ml={17} $w={60} $h={15}>
              <SBtn $w="15px" $h="15px"><Tri $d="left" /></SBtn>
              <Thumb $w="35px" $h="15px">⋮⋮⋮</Thumb>
            </HBar>
          </Panel>
          <TopColumns $pt={2}>
            <Col $w={287}>
              <Row><Label $w={116}>Buyer</Label><SelectF w={138}>-No Sales Employee-</SelectF><Pick /></Row>
              <Row $mt={2}><Label $w={116}>Owner</Label><Field $w={138} /></Row>
              <Row $mt={43} $h={54}><Label $w={116}>Remarks</Label><Field $w={138} /></Row>
            </Col>
            <Col $w={400}>
              <Row $mt={6} $h={12}><Label $w={113}>Total Before Discount</Label><Field $w={200} $tone="g" /></Row>
              <Row $mt={1} $h={12}><Label $w={63}>Discount</Label><Field $w={34} /><Spacer $w={3} /><Plain>%</Plain><Spacer $w={5} /><Field $w={200} /></Row>
              <Row $mt={2} $h={12}><Label $w={100} $pl={3}>Freight</Label><IconSvg width="13" height="12"><path d="M1 4.500h5v-3l5 4.500-5 4.500v-3H1z" fill="#f5d33a" stroke="#c9a41e" /></IconSvg><Field $w={200} $tone="g" /></Row>
              <Row $mt={1} $h={12}><Label $w={113}>Tax</Label><Field $w={200} $tone="g" /></Row>
              <Row $mt={2} $h={12}><Label $w={113}>Total Credit</Label><Field $w={200} /></Row>
            </Col>
          </TopColumns>
          <Row $mt={20} $h={18} $ml={-1}>
            <Button $w={80}><BtnLabel>Add &amp; New</BtnLabel><Split><SplitMark /></Split></Button><Spacer $w={7} />
            <Button $w={93} $off><BtnLabel>Add Draft &amp; New</BtnLabel><Split><SplitMark $off /></Split></Button><Spacer $w={6} />
            <Button $w={61}>Cancel</Button><Spacer $w={90} />
            <Button $w={96} $off>Copy From</Button><Spacer $w={3} />
            <Button $w={90} $off>Copy To</Button>
          </Row>
        </Body>
      </Frame>
    </Placed>
  );
}

export default function App() {
  return (
    <Page>
      <Global />
      <MenuBar>
        {menus.map(([m, w]) => <MenuItem key={m} $w={w}><u>{m[0]}</u>{m.slice(1)}</MenuItem>)}
        <Swatches>
          <Swatch $c="#625e62" /><Swatch $c="#ccffff" /><Swatch $c="#9c8268" /><Swatch $c="#6699cc" /><Swatch $c="#625e62" /><Swatch $c="#ffffff" /><Swatch $c="#7fb2e5" /><Swatch $w={40} $c="#625e62" /><Swatch $c="#6699cc" /><Swatch $c="#5f6766" /><Swatch $w={10} $c="#6699dd" />
        </Swatches>
      </MenuBar>
      <OrangeLine />
      <Toolbar>
        {toolGroups.map(([gap, items], i) => (
          <ToolGroup key={i} $gap={gap}>
            {items.map(k => <Tool key={k}><S>{TI[k]}</S></Tool>)}
          </ToolGroup>
        ))}
      </Toolbar>
      <ToolStrip />
      <Desktop>
        <MainMenu />
        <SerialWindow />
        <GoodsWindow />
        <CampaignWindow />
      </Desktop>
    </Page>
  );
}
